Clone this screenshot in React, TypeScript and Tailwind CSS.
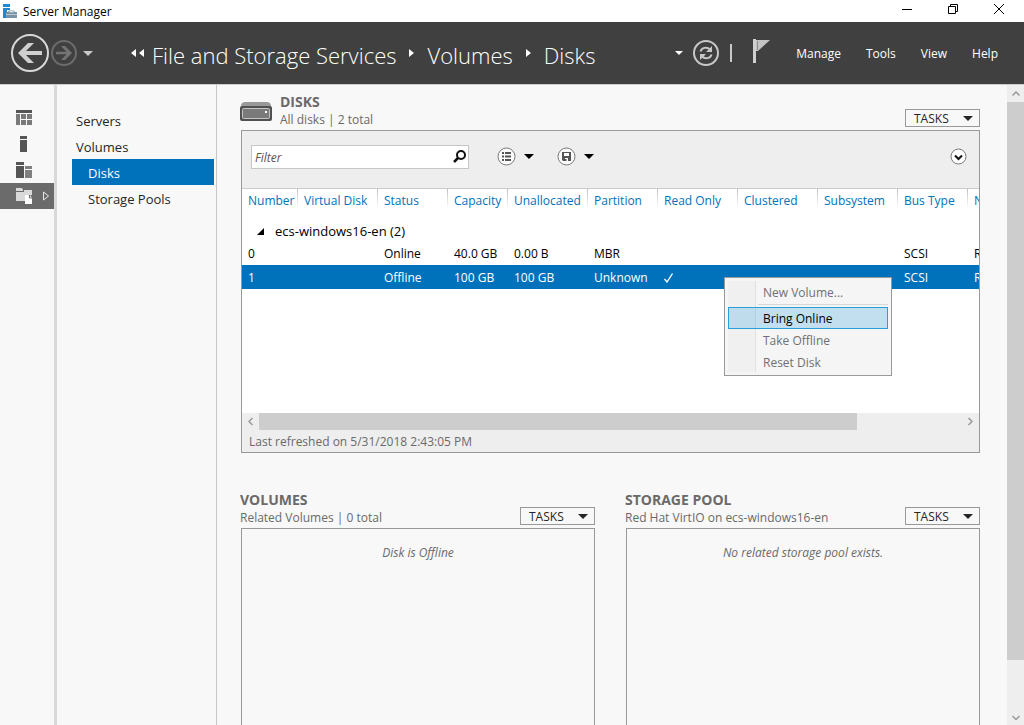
import clsx from 'clsx';
import React, { useState } from 'react';

interface Disk {
  number: number;
  virtualDisk?: string;
  status: string;
  capacity: string;
  unallocated: string;
  partition: string;
  readOnly: boolean;
  clustered?: string;
  subsystem?: string;
  busType: string;
  name: string;
}

const DISKS: Disk[] = [
  { number: 0, status: 'Online', capacity: '40.0 GB', unallocated: '0.00 B', partition: 'MBR', readOnly: false, busType: 'SCSI', name: 'Red Hat VirtIO' },
  { number: 1, status: 'Offline', capacity: '100 GB', unallocated: '100 GB', partition: 'Unknown', readOnly: true, busType: 'SCSI', name: 'Red Hat VirtIO' },
];

const COLUMNS = [
  { label: 'Number', width: 'w-[56px]' },
  { label: 'Virtual Disk', width: 'w-[80px]' },
  { label: 'Status', width: 'w-[70px]' },
  { label: 'Capacity', width: 'w-[60px]' },
  { label: 'Unallocated', width: 'w-[80px]' },
  { label: 'Partition', width: 'w-[70px]' },
  { label: 'Read Only', width: 'w-[80px]' },
  { label: 'Clustered', width: 'w-[80px]' },
  { label: 'Subsystem', width: 'w-[80px]' },
  { label: 'Bus Type', width: 'w-[70px]' },
  { label: 'Name', width: 'w-[80px]' },
];

const NAV_ITEMS = [
  { label: 'Servers', nested: false },
  { label: 'Volumes', nested: false },
  { label: 'Disks', nested: true },
  { label: 'Storage Pools', nested: true },
];

const CaretDown: React.FC<{ className?: string }> = ({ className }) => (
  <svg viewBox="0 0 10 5" className={clsx('h-[5px] w-[10px] shrink-0', className)} fill="currentColor" aria-hidden="true">
    <path d="M0 0h10L5 5z" />
  </svg>
);

const Crumb: React.FC<{ children: React.ReactNode }> = ({ children }) => (
  <a href="#" className="pt-[3px] text-[22px] leading-8 font-light text-white">
    {children}
  </a>
);

const CrumbArrow: React.FC = () => (
  <svg viewBox="0 0 5 8" className="mx-[13px] h-2 w-[5px]" fill="#fff" aria-hidden="true">
    <path d="M0 0l5 4-5 4z" />
  </svg>
);

const TitleBar: React.FC = () => (
  <div className="flex h-[22px] shrink-0 items-center bg-white pl-[3px]">
    <svg viewBox="0 0 14 14" className="h-[14px] w-[14px]" aria-hidden="true">
      <path d="M0 0h7v3H0zM0 4h7v2H4v3H3v5H0z" fill="#1e88d2" />
      <path d="M6 6.5h5l1 1.5h2v2.500H3V8h2z" fill="#7793a5" />
      <path d="M6.500 7.200h4l.6 1H6z" fill="#fff" />
      <path d="M3 11h11v3H3z" fill="#7793a5" />
    </svg>
    <span className="ml-1.5 pt-0.5 text-xs text-black">Server Manager</span>
    <div className="mr-0.5 ml-auto flex h-full">
      <button type="button" aria-label="Minimize" className="flex w-[46px] items-center justify-center">
        <svg viewBox="0 0 10 10" className="mb-1 h-[10px] w-[10px]" aria-hidden="true">
          <path d="M0 5.500h10" stroke="#000" />
        </svg>
      </button>
      <button type="button" aria-label="Restore" className="flex w-[46px] items-center justify-center">
        <svg viewBox="0 0 10 10" className="mb-1 h-[10px] w-[10px]" fill="none" stroke="#000" aria-hidden="true">
          <path d="M.5 2.500h7v7h-7zM2.500 2.500v-2h7v7h-2" />
        </svg>
      </button>
      <button type="button" aria-label="Close" className="flex w-[46px] items-center justify-center">
        <svg viewBox="0 0 10 10" className="mb-1 h-[10px] w-[10px]" stroke="#000" aria-hidden="true">
          <path d="M0 0l10 10M10 0L0 10" />
        </svg>
      </button>
    </div>
  </div>
);

const Header: React.FC = () => (
  <header className="flex h-[62px] shrink-0 items-center bg-[#404040] pr-[26px] pl-[11px] text-white">
    <button type="button" aria-label="Back">
      <svg viewBox="0 0 38 38" className="h-[38px] w-[38px]" aria-hidden="true">
        <circle cx="19" cy="19" r="18" fill="none" stroke="#d8d8d8" strokeWidth="2" />
        <path d="M7 19L17 9h6l-8 8h16v4H15l8 8h-6z" fill="#d0d0d0" />
      </svg>
    </button>
    <button type="button" aria-label="Forward" className="ml-0.5">
      <svg viewBox="0 0 26 26" className="h-[26px] w-[26px]" aria-hidden="true">
        <circle cx="13" cy="13" r="12" fill="none" stroke="#6c6c6c" strokeWidth="2" />
        <path d="M21 13l-7 7h-4l5.500-5.700H5v-2.600h10.500L10 6h4z" fill="#747474" />
      </svg>
    </button>
    <button type="button" aria-label="History" className="ml-1.5">
      <CaretDown className="text-[#c8c8c8]" />
    </button>
    <nav className="ml-[38px] flex flex-1 items-center whitespace-nowrap" aria-label="Breadcrumb">
      <svg viewBox="0 0 13 8" className="mr-2 h-2 w-[13px]" fill="#fff" aria-hidden="true">
        <path d="M5 0v8L0 4zM13 0v8L8 4z" />
      </svg>
      <Crumb>File and Storage Services</Crumb>
      <CrumbArrow />
      <Crumb>Volumes</Crumb>
      <CrumbArrow />
      <Crumb>Disks</Crumb>
    </nav>
    <button type="button" aria-label="More locations" className="mr-2.5">
      <svg viewBox="0 0 8 4" className="h-1 w-2" fill="#fff" aria-hidden="true">
        <path d="M0 0h8L4 4z" />
      </svg>
    </button>
    <button type="button" aria-label="Refresh">
      <svg viewBox="0 0 26 26" className="h-[26px] w-[26px]" fill="none" stroke="#c8c8c8" strokeWidth="2" aria-hidden="true">
        <circle cx="13" cy="13" r="12" />
        <path d="M7.500 11.500C8.500 7.500 14 6.500 17 9.500M18.500 14.500C17.500 18.500 12 19.500 9 16.500" />
        <path d="M19 6v6h-6zM7 20v-6h6z" fill="#c8c8c8" stroke="none" />
      </svg>
    </button>
    <div className="ml-[11px] h-[18px] w-0.5 bg-[#c8c8c8]" />
    <button type="button" aria-label="Notifications" className="ml-[21px]">
      <svg viewBox="0 0 17 24" className="mb-1 h-6 w-[17px]" aria-hidden="true">
        <path d="M0 0h3v24H0z" fill="#d0d0d0" />
        <path d="M3 1h14L5 12H3z" fill="#c4c4c4" />
        <path d="M4.500 2v9" stroke="#8c8c8c" />
      </svg>
    </button>
    <div className="ml-[26px] flex gap-[25px] pt-0.5 text-xs">
      <button type="button">Manage</button>
      <button type="button">Tools</button>
      <button type="button">View</button>
      <button type="button">Help</button>
    </div>
  </header>
);

const IconRail: React.FC = () => (
  <nav className="w-[54px] shrink-0 pt-5" aria-label="Pages">
    <a href="#" aria-label="Dashboard" className="flex h-[26px] items-center pl-4">
      <svg viewBox="0 0 16 16" className="h-4 w-4" aria-hidden="true">
        <path d="M0 0h16v3H0z" fill="#555" />
        <path d="M0 4h4v11H0zM5 4h5v5H5zM11 4h5v5h-5zM5 10h5v5H5zM11 10h5v5h-5z" fill="#7a7a7a" />
      </svg>
    </a>
    <a href="#" aria-label="Local Server" className="flex h-[26px] items-center pl-4">
      <svg viewBox="0 0 16 16" className="h-4 w-4" fill="#555" aria-hidden="true">
        <path d="M4 0h7v3H4zM4 4h7v12H4z" />
      </svg>
    </a>
    <a href="#" aria-label="All Servers" className="flex h-[26px] items-center pl-4">
      <svg viewBox="0 0 16 16" className="h-4 w-4" aria-hidden="true">
        <path d="M0 0h8v3H0zM0 4h8v12H0z" fill="#555" />
        <path d="M9 4h7v3H9zM9 8h7v8H9z" fill="#808080" />
      </svg>
    </a>
    <a href="#" aria-label="File and Storage Services" aria-current="page" className="flex h-[26px] items-center bg-[#6b6b6b] pl-4">
      <svg viewBox="0 0 17 17" className="h-[17px] w-[17px]" aria-hidden="true">
        <path d="M0 0h6l1 2v1H0zM0 4h8V2h8v5H9v6H0z" fill="#d9d9d9" />
        <path d="M9 7h5l2 3v6H9z" fill="#fff" />
        <path d="M13.500 7v3H17" fill="none" stroke="#6b6b6b" />
      </svg>
      <svg viewBox="0 0 6 10" className="ml-2.5 h-[10px] w-1.5" fill="none" stroke="#e8e8e8" aria-hidden="true">
        <path d="M.5 1v8l5-4z" />
      </svg>
    </a>
  </nav>
);

const SideNav: React.FC = () => (
  <nav className="w-[163px] shrink-0 border-r border-l-[3px] border-r-[#c6c6c6] border-l-[#d9d9d9] pt-[22px] pr-0.5 pl-[15px]" aria-label="File and Storage Services">
    {NAV_ITEMS.map(({ label, nested }) => (
      <a
        key={label}
        href="#"
        aria-current={label === 'Disks' ? 'page' : undefined}
        className={clsx(
          'flex h-[26px] items-center pt-[3px] text-[13px]',
          nested ? 'pl-4' : 'pl-1',
          label === 'Disks' ? 'bg-[#0072bc] text-white' : 'text-[#262626]'
        )}
      >
        {label}
      </a>
    ))}
  </nav>
);

const TasksButton: React.FC = () => (
  <button type="button" className="mb-[3px] flex h-[18px] w-[75px] items-center justify-between border border-[#999] pr-1.5 pl-2 text-xs text-[#262626]">
    <span className="pt-px">TASKS</span>
    <CaretDown />
  </button>
);

interface TileHeaderProps {
  title: string;
  subtitle: string;
  icon?: React.ReactNode;
}

const TileHeader: React.FC<TileHeaderProps> = ({ title, subtitle, icon }) => (
  <div className="flex h-[45px] shrink-0 items-end justify-between">
    <div className="flex items-center pb-0.5">
      {icon}
      <div className="text-[#6a6a6a]">
        <h2 className="text-sm leading-[18px] font-bold">{title}</h2>
        <p className="text-xs leading-[17px]">{subtitle}</p>
      </div>
    </div>
    <TasksButton />
  </div>
);

const DriveIcon: React.FC = () => (
  <svg viewBox="0 0 32 19" className="mt-0.5 mr-2 h-[19px] w-8" aria-hidden="true">
    <path d="M4 0h24q3 1 3 4H1q0-3 3-4z" fill="#999" />
    <rect y="4" width="32" height="15" rx="2" fill="#505050" />
    <rect x="2.500" y="6.500" width="27" height="10" rx="1" fill="#7a7a7a" stroke="#c4c4c4" />
    <path d="M25 9h2v2h-2z" fill="#fff" />
  </svg>
);

const FilterBar: React.FC = () => {
  const [filter, setFilter] = useState('');

  return (
    <div className="flex h-[58px] shrink-0 items-center border-b border-[#ccc] bg-[#eee] pr-3 pb-1.5 pl-[9px]">
      <div className="flex h-6 w-[218px] items-center border border-[#c6c6c6] bg-white pr-0.5 pl-[3px]">
        <input
          type="text"
          aria-label="Filter"
          placeholder="Filter"
          value={filter}
          onChange={(e) => setFilter(e.target.value)}
          className="w-full min-w-0 flex-1 pt-0.5 text-xs text-black outline-none placeholder:text-[#555] placeholder:italic"
        />
        <button type="button" aria-label="Search">
          <svg viewBox="0 0 13 13" className="h-[13px] w-[13px]" fill="none" stroke="#111" strokeWidth="2" aria-hidden="true">
            <circle cx="8" cy="5" r="4" />
            <path d="M5 8l-4 4" strokeWidth="2.500" />
          </svg>
        </button>
      </div>
      <button type="button" aria-label="Saved views" className="ml-7 flex items-center gap-2">
        <svg viewBox="0 0 19 19" className="h-[19px] w-[19px]" aria-hidden="true">
          <circle cx="9.500" cy="9.500" r="8.500" fill="#fafafa" stroke="#777" />
          <path d="M5 5h2v2H5zM8 5h6v2H8zM5 8.500h2v2H5zM8 8.500h6v2H8zM5 12h2v2H5zM8 12h6v2H8z" fill="#555" />
        </svg>
        <CaretDown />
      </button>
      <button type="button" aria-label="Save query" className="ml-[23px] flex items-center gap-2">
        <svg viewBox="0 0 19 19" className="h-[19px] w-[19px]" aria-hidden="true">
          <circle cx="9.500" cy="9.500" r="8.500" fill="#fafafa" stroke="#777" />
          <path d="M5 5h9v9H6l-1-1z" fill="#555" />
          <path d="M7 6h5v3H7zM8 11h3v3H8z" fill="#fafafa" />
          <path d="M8 12h1.500v2H8z" fill="#555" />
        </svg>
        <CaretDown />
      </button>
      <button type="button" aria-label="Expand" className="ml-auto">
        <svg viewBox="0 0 17 17" className="h-[17px] w-[17px]" fill="none" aria-hidden="true">
          <circle cx="8.500" cy="8.500" r="7.500" fill="#fff" stroke="#777" />
          <path d="M5 7.500l3.500 3.500L12 7.500" stroke="#111" strokeWidth="2" />
        </svg>
      </button>
    </div>
  );
};

const MENU_ITEM = 'flex h-[22px] w-full items-center border pt-0.5 pl-[34px] text-left';

const ContextMenu: React.FC = () => (
  <div role="menu" className="absolute top-[88px] left-[482px] w-[168px] border border-[#999] bg-[#f5f5f5] p-[3px] pb-0.5 text-xs text-[#707070]">
    {/* icon gutter */}
    <div className="absolute inset-y-[3px] left-[3px] w-7 border-r border-[#e0e0e0] bg-[#f0f0f0]" />
    <div className="relative">
      <button type="button" role="menuitem" disabled className={clsx(MENU_ITEM, 'border-transparent')}>
        New Volume...
      </button>
      <div role="separator" className="mt-px mb-0.5 ml-[30px] h-px bg-[#d7d7d7]" />
      <button type="button" role="menuitem" className={clsx(MENU_ITEM, 'border-[#26a0da] bg-[#26a0da]/25 text-black')}>
        Bring Online
      </button>
      <button type="button" role="menuitem" disabled className={clsx(MENU_ITEM, 'border-transparent')}>
        Take Offline
      </button>
      <button type="button" role="menuitem" disabled className={clsx(MENU_ITEM, 'border-transparent')}>
        Reset Disk
      </button>
    </div>
  </div>
);

const DiskTable: React.FC = () => {
  const [selected, setSelected] = useState(1);

  return (
    <div className="relative h-[224px] overflow-hidden bg-white text-xs whitespace-nowrap">
      <table className="w-[806px] table-fixed border-collapse text-left">
        <thead>
          <tr className="h-6">
            {COLUMNS.map(({ label, width }) => (
              <th
                key={label}
                className={clsx(
                  width,
                  'bg-[linear-gradient(to_bottom,#c0c0c0,#fff)] bg-[length:1px_20px] bg-right-top bg-no-repeat pl-1.5 font-normal text-[#0072bc]'
                )}
              >
                {label}
              </th>
            ))}
          </tr>
        </thead>
        <tbody className="text-black">
          <tr className="h-7">
            <td colSpan={COLUMNS.length} className="pt-2 pl-[15px] text-[13px] leading-5">
              <button type="button" className="flex items-center">
                <svg viewBox="0 0 7 7" className="mr-[11px] h-[7px] w-[7px]" aria-hidden="true">
                  <path d="M7 0v7H0z" />
                </svg>
                ecs-windows16-en (2)
              </button>
            </td>
          </tr>
          {DISKS.map((disk) => (
            <tr
              key={disk.number}
              onClick={() => setSelected(disk.number)}
              className={clsx('h-6', disk.number === selected && 'bg-[#0072bc] text-white')}
            >
              <td className="pt-0.5 pl-1.5">{disk.number}</td>
              <td className="pt-0.5 pl-1.5">{disk.virtualDisk}</td>
              <td className="pt-0.5 pl-1.5">{disk.status}</td>
              <td className="pt-0.5 pl-1.5">{disk.capacity}</td>
              <td className="pt-0.5 pl-1.5">{disk.unallocated}</td>
              <td className="pt-0.5 pl-1.5">{disk.partition}</td>
              <td className="pt-0.5 pl-1.5">
                {disk.readOnly && (
                  <svg viewBox="0 0 9 10" className="h-[10px] w-[9px]" fill="none" stroke="currentColor" role="img" aria-label="Yes">
                    <path d="M.5 6L3 9L8.500.500" strokeWidth="1.300" />
                  </svg>
                )}
              </td>
              <td className="pt-0.5 pl-1.5">{disk.clustered}</td>
              <td className="pt-0.5 pl-1.5">{disk.subsystem}</td>
              <td className="pt-0.5 pl-1.5">{disk.busType}</td>
              <td className="pt-0.5 pl-1.5">{disk.name}</td>
            </tr>
          ))}
        </tbody>
      </table>
      <ContextMenu />
    </div>
  );
};

const HorizontalScrollbar: React.FC = () => (
  <div className="flex h-[17px] items-center justify-between bg-[#eee]">
    <svg viewBox="0 0 17 17" className="h-[17px] w-[17px]" fill="none" stroke="#999" strokeWidth="1.500" aria-hidden="true">
      <path d="M10.500 5L7 8.500l3.500 3.500" />
    </svg>
    <div className="h-full flex-1">
      <div className="h-full w-[85%] bg-[#cdcdcd]" />
    </div>
    <svg viewBox="0 0 17 17" className="h-[17px] w-[17px]" fill="none" stroke="#999" strokeWidth="1.500" aria-hidden="true">
      <path d="M6.500 5L10 8.500L6.500 12" />
    </svg>
  </div>
);

const VerticalScrollbar: React.FC = () => (
  <div className="flex w-[17px] shrink-0 flex-col bg-[#eee]">
    <svg viewBox="0 0 17 17" className="h-[17px] w-[17px]" fill="none" stroke="#999" strokeWidth="1.500" aria-hidden="true">
      <path d="M5.500 10.500L9 7l3.500 3.500" />
    </svg>
    <div className="flex-1">
      <div className="h-[92%] bg-[#cdcdcd]" />
    </div>
    <svg viewBox="0 0 17 17" className="h-[17px] w-[17px]" fill="none" stroke="#999" strokeWidth="1.500" aria-hidden="true">
      <path d="M5.500 8L9 11.500L12.500 8" />
    </svg>
  </div>
);

interface RelatedTileProps {
  title: string;
  subtitle: string;
  message: string;
}

const RelatedTile: React.FC<RelatedTileProps> = ({ title, subtitle, message }) => (
  <section className="flex flex-col">
    <TileHeader title={title} subtitle={subtitle} />
    <div className="ml-px flex-1 border border-b-0 border-[#999] pt-[15px] text-center text-xs leading-[18px] text-[#6a6a6a] italic">
      {message}
    </div>
  </section>
);

const App: React.FC = () => (
  <div className="flex h-screen flex-col overflow-hidden bg-[#f8f8f8] font-['Open_Sans','Noto_Sans',sans-serif]">
    <TitleBar />
    <Header />
    <div className="flex min-h-0 flex-1 border-t border-[#ccc]">
      <IconRail />
      <SideNav />
      <main className="flex min-w-0 flex-1 flex-col pr-[27px] pl-[23px]">
        <section>
          <TileHeader title="DISKS" subtitle="All disks | 2 total" icon={<DriveIcon />} />
          <div className="ml-px border border-[#999]">
            <FilterBar />
            <DiskTable />
            <HorizontalScrollbar />
            <p className="bg-[#eee] pt-px pl-[7px] text-xs leading-[21px] text-[#6a6a6a]">
              Last refreshed on 5/31/2018 2:43:05 PM
            </p>
          </div>
        </section>
        <div className="mt-[30px] grid flex-1 grid-cols-2 gap-[30px]">
          <RelatedTile title="VOLUMES" subtitle="Related Volumes | 0 total" message="Disk is Offline" />
          <RelatedTile title="STORAGE POOL" subtitle="Red Hat VirtIO on ecs-windows16-en" message="No related storage pool exists." />
        </div>
      </main>
      <VerticalScrollbar />
    </div>
  </div>
);

export default App;
